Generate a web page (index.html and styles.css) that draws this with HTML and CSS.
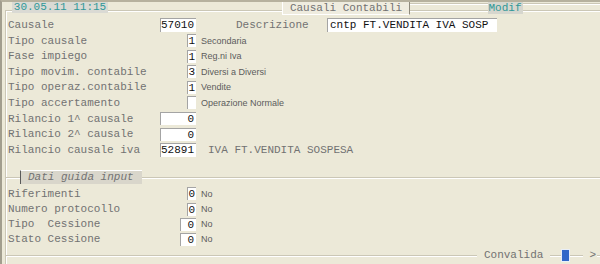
FILE: index.html
```html
<!DOCTYPE html>
<html lang="it">
<head>
    <meta charset="UTF-8">
    <meta name="viewport" content="width=device-width, initial-scale=1.0">
    <title>Causali Contabili</title>
    <link rel="stylesheet" href="styles.css">
</head>
<body>
    <div class="topbar">
        <span class="stamp">30.05.11 11:15</span>
        <span class="title">Causali Contabili</span>
        <span class="rule"></span>
        <span class="mode">Modif</span>
        <span class="rule"></span>
    </div>

    <div class="panel">
        <div class="rows">
            <div class="row">
                <span class="label">Causale</span>
                <span class="field"><span class="box wide tall">57010</span></span>
                <span class="extra">
                    <span class="label desc-label">Descrizione</span>
                    <span class="box desc tall">cntp FT.VENDITA IVA SOSP</span>
                </span>
            </div>
            <div class="row">
                <span class="label">Tipo causale</span>
                <span class="field"><span class="box small">1</span></span>
                <span class="caption">Secondaria</span>
            </div>
            <div class="row">
                <span class="label">Fase impiego</span>
                <span class="field"><span class="box small">1</span></span>
                <span class="caption">Reg.ni Iva</span>
            </div>
            <div class="row">
                <span class="label">Tipo movim. contabile</span>
                <span class="field"><span class="box small">3</span></span>
                <span class="caption">Diversi a Diversi</span>
            </div>
            <div class="row">
                <span class="label">Tipo operaz.contabile</span>
                <span class="field"><span class="box small">1</span></span>
                <span class="caption">Vendite</span>
            </div>
            <div class="row">
                <span class="label">Tipo accertamento</span>
                <span class="field"><span class="box small"></span></span>
                <span class="caption">Operazione Normale</span>
            </div>
            <div class="row">
                <span class="label">Rilancio 1^ causale</span>
                <span class="field"><span class="box wide">0</span></span>
            </div>
            <div class="row">
                <span class="label">Rilancio 2^ causale</span>
                <span class="field"><span class="box wide">0</span></span>
            </div>
            <div class="row">
                <span class="label">Rilancio causale iva</span>
                <span class="field"><span class="box wide tall">52891</span></span>
                <span class="label note">IVA FT.VENDITA SOSPESA</span>
            </div>
        </div>

        <div class="section-head">
            <span class="tab">Dati guida input</span>
        </div>

        <div class="rows lower">
            <div class="row">
                <span class="label">Riferimenti</span>
                <span class="field"><span class="box small">0</span></span>
                <span class="caption">No</span>
            </div>
            <div class="row">
                <span class="label">Numero protocollo</span>
                <span class="field"><span class="box small">0</span></span>
                <span class="caption">No</span>
            </div>
            <div class="row">
                <span class="label">Tipo  Cessione</span>
                <span class="field"><span class="box mid">0</span></span>
                <span class="caption">No</span>
            </div>
            <div class="row">
                <span class="label">Stato Cessione</span>
                <span class="field"><span class="box mid">0</span></span>
                <span class="caption">No</span>
            </div>
        </div>

        <div class="footer">
            <span class="seg grow"></span>
            <span class="label action">Convalida</span>
            <span class="seg s1"></span>
            <span class="key"></span>
            <span class="seg s2"></span>
            <span class="label arrow">&gt;</span>
            <span class="seg s3"></span>
        </div>
    </div>
</body>
</html>
```

FILE: styles.css
```css
html, body {
    margin: 0;
    padding: 0;
}
body {
    width: 600px;
    height: 264px;
    box-sizing: border-box;
    overflow: hidden;
    background-color: #ece9d8;
    border-top: 2px solid #b6b19e;
    border-left: 2px solid #a29e8e;
    font-family: "Liberation Mono", monospace;
    font-size: 11px;
    color: #727272;
}
.topbar {
    display: flex;
    align-items: flex-start;
    height: 12px;
    margin-bottom: -4px;
    position: relative;
    z-index: 1;
}
.stamp {
    margin-left: 10px;
    width: 96px;
    height: 11px;
    line-height: 11px;
    background-color: #dadad4;
    color: #2f9898;
    text-align: center;
}
.title {
    margin-left: 174px;
    width: 126px;
    height: 12px;
    line-height: 12px;
    background-color: #efecdf;
    border-left: 1px solid #ffffff;
    border-right: 1px solid #8e8a7c;
    border-bottom: 1px solid #ffffff;
    text-align: center;
}
.rule {
    flex: 1;
    margin-top: 1px;
    border-top: 1px solid #cbc7b6;
    border-bottom: 1px solid #ffffff;
}
.mode {
    width: 35px;
    height: 12px;
    line-height: 12px;
    background-color: #d6d6ce;
    color: #2f9898;
    text-align: center;
}
.panel {
    margin-left: 3px;
    height: 254px;
    border-top: 1px solid #cbc7b6;
    border-left: 1px solid #cbc7b6;
    box-shadow: inset 1px 1px 0 #ffffff;
}
.rows {
    padding: 6.2px 0 0 2px;
}
.row {
    display: grid;
    grid-template-columns: 152px 36px 1fr;
    align-items: center;
    height: 15.6px;
}
.lower {
    padding-top: 2.3px;
}
.lower .row {
    height: 15.2px;
}
.label {
    white-space: pre;
    line-height: 13px;
    padding-top: 1px;
}
.field {
    display: flex;
    justify-content: flex-end;
}
.box {
    box-sizing: border-box;
    height: 13px;
    line-height: 12px;
    background-color: #ffffff;
    border-top: 1px solid #a4a4a4;
    border-left: 1px solid #a4a4a4;
    color: #111111;
    text-align: right;
    padding-right: 2px;
    white-space: pre;
}
.tall {
    height: 14px;
    line-height: 13px;
}
.small {
    width: 9px;
    padding-right: 1px;
}
.mid {
    width: 16px;
}
.wide {
    width: 36px;
}
.extra {
    display: flex;
    align-items: center;
}
.desc-label {
    margin-left: 40px;
    width: 91px;
}
.desc {
    width: 170px;
    text-align: left;
    padding-left: 2px;
}
.caption {
    margin-left: 5px;
    font-family: "Liberation Sans", Arial, sans-serif;
    font-size: 9px;
    color: #5c5c5c;
}
.note {
    margin-left: 12px;
}
.section-head {
    margin-top: 12.4px;
    height: 14px;
    display: flex;
    background: linear-gradient(to bottom, transparent 7px, #cbc7b6 7px, #cbc7b6 8px, #ffffff 8px, #ffffff 9px, transparent 9px);
}
.tab {
    margin-left: 14px;
    width: 114px;
    padding-left: 7px;
    height: 13px;
    line-height: 13px;
    background-color: #d9d6cb;
    border-left: 1px solid #5a5a5a;
    border-top: 1px solid #ffffff;
    font-style: italic;
}
.footer {
    display: flex;
    align-items: center;
    height: 17px;
}
.seg {
    height: 0;
    margin-top: 1px;
    border-top: 1px solid #cbc7b6;
    border-bottom: 1px solid #ffffff;
}
.grow {
    flex: 1;
}
.action {
    margin: 0 7px;
}
.s1 {
    width: 11px;
}
.s2 {
    width: 13px;
}
.s3 {
    width: 3px;
}
.key {
    box-sizing: border-box;
    width: 9px;
    height: 13px;
    background-color: #3167c8;
    border: 1px solid #e8eef8;
}
.arrow {
    margin: 0 1px 0 6px;
}
```
